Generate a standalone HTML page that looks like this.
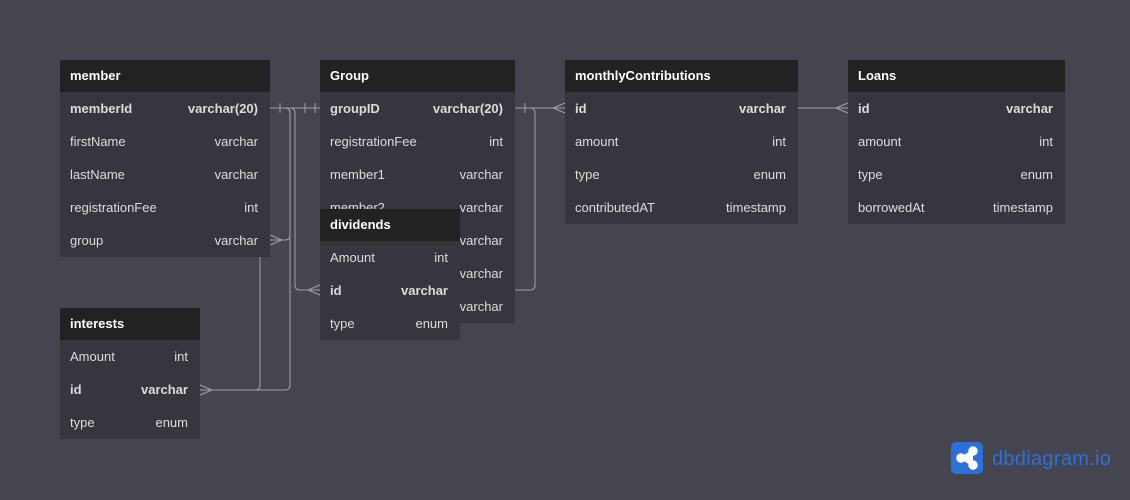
<!DOCTYPE html>
<html><head><style>
body{margin:0;width:1130px;height:500px;background:#45454f;font-family:"Liberation Sans",sans-serif;position:relative;overflow:hidden}
.t{position:absolute;background:#36363f;color:#dcdcdc;font-size:13px}
.h{background:#222;color:#fff;font-weight:bold;height:32px;line-height:32px;padding-left:10px}
.r{height:33px;line-height:33px;padding:0 12px 0 10px;display:flex;justify-content:space-between}
.b{font-weight:bold}
svg{position:absolute;left:0;top:0}
</style></head><body>
<svg width="1130" height="500" style="z-index:0" fill="none" stroke="#a0a0a8" stroke-width="1">
<path d="M270 108H320"/><path d="M280 103v10M305 103v10M315 103v10"/>
<path d="M260 257V385q0 5 -5 5H200M212 390l-12-5M212 390l-12 5"/>
<path d="M290 108q5 0 5 5V285q0 5 5 5H320M308 290l12-5M308 290l12 5"/>
<path d="M285 108q5 0 5 5V385q0 5-5 5H255"/>
<path d="M285 108q5 0 5 5V235q0 5-5 5H270M282 240l-12-5M282 240l-12 5"/>
<path d="M515 108H565M553 108l12-5M553 108l12 5M525 103v10"/>
<path d="M530 108q5 0 5 5V285q0 5-5 5H515"/>
<path d="M798 108H848M836 108l12-5M836 108l12 5"/>
</svg>
<div class="t" style="left:60px;top:60px;width:210px"><div class="h">member</div>
<div class="r b"><span>memberId</span><span>varchar(20)</span></div>
<div class="r"><span>firstName</span><span>varchar</span></div>
<div class="r"><span>lastName</span><span>varchar</span></div>
<div class="r"><span>registrationFee</span><span>int</span></div>
<div class="r"><span>group</span><span>varchar</span></div></div>
<div class="t" style="left:320px;top:60px;width:195px"><div class="h">Group</div>
<div class="r b"><span>groupID</span><span>varchar(20)</span></div>
<div class="r"><span>registrationFee</span><span>int</span></div>
<div class="r"><span>member1</span><span>varchar</span></div>
<div class="r"><span>member2</span><span>varchar</span></div>
<div class="r"><span>member3</span><span>varchar</span></div>
<div class="r"><span>member4</span><span>varchar</span></div>
<div class="r"><span>member5</span><span>varchar</span></div></div>
<div class="t" style="left:565px;top:60px;width:233px"><div class="h">monthlyContributions</div>
<div class="r b"><span>id</span><span>varchar</span></div>
<div class="r"><span>amount</span><span>int</span></div>
<div class="r"><span>type</span><span>enum</span></div>
<div class="r"><span>contributedAT</span><span>timestamp</span></div></div>
<div class="t" style="left:848px;top:60px;width:217px"><div class="h">Loans</div>
<div class="r b"><span>id</span><span>varchar</span></div>
<div class="r"><span>amount</span><span>int</span></div>
<div class="r"><span>type</span><span>enum</span></div>
<div class="r"><span>borrowedAt</span><span>timestamp</span></div></div>
<div class="t" style="left:320px;top:209px;width:140px;z-index:2"><div class="h">dividends</div>
<div class="r"><span>Amount</span><span>int</span></div>
<div class="r b"><span>id</span><span>varchar</span></div>
<div class="r"><span>type</span><span>enum</span></div></div>
<div class="t" style="left:60px;top:308px;width:140px"><div class="h">interests</div>
<div class="r"><span>Amount</span><span>int</span></div>
<div class="r b"><span>id</span><span>varchar</span></div>
<div class="r"><span>type</span><span>enum</span></div></div>
<div style="position:absolute;left:951px;top:442px;width:32px;height:32px;border-radius:5px;background:#2f6fd8">
<svg width="32" height="32" stroke="#fff" stroke-width="2.5" fill="#fff"><path d="M22 9L10 16L22 23"/><circle cx="22" cy="9" r="3.5"/><circle cx="10" cy="16" r="3.5"/><circle cx="22" cy="23" r="3.5"/></svg></div>
<div style="position:absolute;left:992px;top:446px;font-size:20px;color:#2f6fd8;line-height:26px;letter-spacing:0.3px">dbdiagram.io</div>
</body></html>
